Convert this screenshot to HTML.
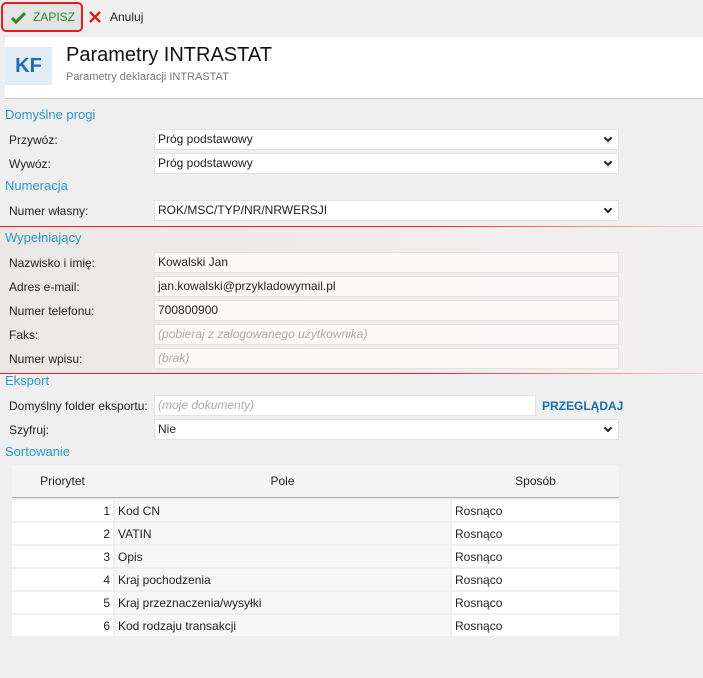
<!DOCTYPE html><html><head><meta charset="utf-8"><style>
body{margin:0;width:703px;height:678px;background:#efefef;font-family:"Liberation Sans",sans-serif;font-size:12px;color:#222;position:relative;overflow:hidden}
.a{position:absolute}
.sec{position:absolute;left:5px;color:#2a9ac8;font-size:13px}
.lbl{position:absolute;left:9px}
.inp{position:absolute;left:154px;width:465px;height:21px;background:#fff;border:1px solid #e2e2e2;box-sizing:border-box;padding-left:3px;line-height:19px}
.ph{color:#aaa;font-style:italic}
.sel:after{content:"";position:absolute;right:7px;top:5px;width:4px;height:4px;border-right:2px solid #222;border-bottom:2px solid #222;transform:rotate(45deg)}
table{position:absolute;left:12px;top:463px;width:607px;border-collapse:separate;border-spacing:0 2px;font-size:12px;table-layout:fixed}
th{background:#f5f5f5;font-weight:normal;height:30px;border-bottom:1px solid #aaa}
td{background:#fff;height:21px;padding:0 3px}
td:nth-child(2){background:#f7f7f7;border-left:2px solid #efefef;border-right:2px solid #efefef}
</style></head><body>
<div class="a" style="left:1px;top:2px;width:82px;height:30px;border:2px solid #e02020;border-radius:5px;box-sizing:border-box;background:#e4e4e4"></div>
<svg class="a" style="left:11px;top:11px" width="15" height="13"><path d="M1 7 L5 11 L14 2" stroke="#2a8a2a" stroke-width="3" fill="none"/></svg>
<div class="a" style="left:33px;top:10px;color:#2a8a2a;font-size:12px">ZAPISZ</div>
<svg class="a" style="left:89px;top:11px" width="12" height="12"><path d="M1 1L11 11M11 1L1 11" stroke="#e02020" stroke-width="2.5"/></svg>
<div class="a" style="left:110px;top:10px">Anuluj</div>
<div class="a" style="left:5px;top:37px;width:698px;height:61px;background:#fff;border-bottom:1px solid #ccc"></div>
<div class="a" style="left:5px;top:47px;width:47px;height:38px;background:#e1ecf4;color:#1a6eb0;font-size:20px;font-weight:bold;text-align:center;line-height:38px">KF</div>
<div class="a" style="left:66px;top:44px;font-size:20px;color:#111">Parametry INTRASTAT</div>
<div class="a" style="left:66px;top:71px;font-size:11px;color:#777">Parametry deklaracji INTRASTAT</div>
<div class="sec" style="top:107px">Domyślne progi</div>
<div class="lbl" style="top:133px">Przywóz:</div><div class="inp sel" style="top:129px">Próg podstawowy</div>
<div class="lbl" style="top:157px">Wywóz:</div><div class="inp sel" style="top:153px">Próg podstawowy</div>
<div class="sec" style="top:178px">Numeracja</div>
<div class="lbl" style="top:204px">Numer własny:</div><div class="inp sel" style="top:200px">ROK/MSC/TYP/NR/NRWERSJI</div>
<div class="a" style="left:0;top:226px;width:703px;height:148px;background:linear-gradient(90deg,#ebe7e7,#f1eded 60%,#efefef)"></div>
<div class="a" style="left:0;top:226px;width:703px;height:1px;background:linear-gradient(90deg,#f02020 60%,#f8d0d0)"></div>
<div class="a" style="left:0;top:373px;width:703px;height:1px;background:linear-gradient(90deg,#f02020 60%,#f8d0d0)"></div>
<div class="sec" style="top:230px">Wypełniający</div>
<div class="lbl" style="top:256px">Nazwisko i imię:</div><div class="inp" style="top:252px;background:#fdf9f9">Kowalski Jan</div>
<div class="lbl" style="top:280px">Adres e-mail:</div><div class="inp" style="top:276px;background:#fdf9f9">jan.kowalski@przykladowymail.pl</div>
<div class="lbl" style="top:304px">Numer telefonu:</div><div class="inp" style="top:300px;background:#fdf9f9">700800900</div>
<div class="lbl" style="top:328px">Faks:</div><div class="inp ph" style="top:324px;background:#fdf9f9">(pobieraj z zalogowanego użytkownika)</div>
<div class="lbl" style="top:352px">Numer wpisu:</div><div class="inp ph" style="top:348px;background:#fdf9f9">(brak)</div>
<div class="sec" style="top:373px">Eksport</div>
<div class="lbl" style="top:399px">Domyślny folder eksportu:</div><div class="inp ph" style="top:395px;width:382px">(moje dokumenty)</div>
<div class="a" style="left:542px;top:399px;color:#1a6eb0;font-weight:bold">PRZEGLĄDAJ</div>
<div class="lbl" style="top:423px">Szyfruj:</div><div class="inp sel" style="top:419px">Nie</div>
<div class="sec" style="top:444px">Sortowanie</div>
<table><colgroup><col style="width:101px"><col style="width:339px"><col style="width:167px"></colgroup><tr><th>Priorytet</th><th>Pole</th><th>Sposób</th></tr>
<tr><td align="right">1</td><td>Kod CN</td><td>Rosnąco</td></tr>
<tr><td align="right">2</td><td>VATIN</td><td>Rosnąco</td></tr>
<tr><td align="right">3</td><td>Opis</td><td>Rosnąco</td></tr>
<tr><td align="right">4</td><td>Kraj pochodzenia</td><td>Rosnąco</td></tr>
<tr><td align="right">5</td><td>Kraj przeznaczenia/wysyłki</td><td>Rosnąco</td></tr>
<tr><td align="right">6</td><td>Kod rodzaju transakcji</td><td>Rosnąco</td></tr></table>
</body></html>
